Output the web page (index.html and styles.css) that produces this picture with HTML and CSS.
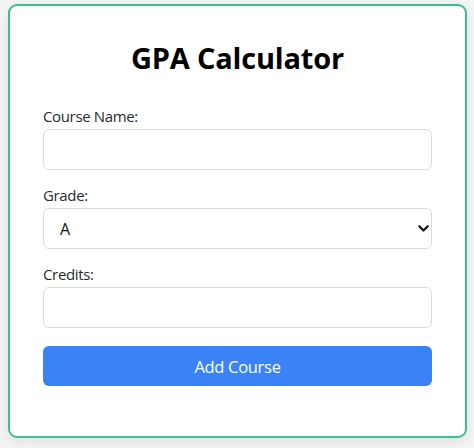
FILE: index.html
```html
<!DOCTYPE html>
<html>
<head>
<meta charset="utf-8">
<link rel="stylesheet" href="styles.css">
</head>
<body>
<div class="card">
  <h1 class="title">GPA Calculator</h1>
  <form class="form">
    <div class="field">
      <label class="label">Course Name:</label>
      <input class="control" type="text">
    </div>
    <div class="field">
      <label class="label">Grade:</label>
      <div class="select-wrap">
        <div class="control select">A</div>
        <svg class="chev" width="11" height="7" viewBox="0 0 11 7"><path d="M1.3 1.3 L5.5 5.5 L9.7 1.3" fill="none" stroke="#111" stroke-width="2.2" stroke-linecap="round" stroke-linejoin="round"/></svg>
      </div>
    </div>
    <div class="field">
      <label class="label">Credits:</label>
      <input class="control" type="text">
    </div>
    <button class="btn" type="button">Add Course</button>
  </form>
</div>
</body>
</html>
```
FILE: styles.css
```css
* { box-sizing: border-box; }
html, body { margin: 0; }
body {
  background: #f3f4f6;
  padding: 4px 7px 0 8px;
  font-family: "Open Sans", "Noto Sans", sans-serif;
  height: 448px;
  overflow: hidden;
}
.card {
  width: 459px;
  height: 434px;
  background: #fff;
  border: 2px solid #3dbf8c;
  border-radius: 9px;
  box-shadow: 0 4px 12px rgba(0,0,0,0.08);
  padding: 0 33px;
}
.title {
  margin: 32px 0 0;
  font-size: 29px;
  line-height: 40px;
  font-weight: 700;
  text-align: center;
  color: #000;
  letter-spacing: -0.2px;
}
.form {
  display: flex;
  flex-direction: column;
  margin-top: 29px;
}
.field {
  display: flex;
  flex-direction: column;
  margin-bottom: 16px;
}
.label {
  font-size: 15px;
  line-height: 19px;
  font-weight: 500;
  color: #262b33;
  letter-spacing: -0.35px;
  margin-bottom: 3px;
}
.control {
  height: 41px;
  width: 100%;
  border: 1px solid #dcdcdc;
  border-radius: 6px;
  background: #fff;
  font-family: inherit;
  font-size: 16px;
  padding: 0 16px;
}
.select-wrap { position: relative; }
.select {
  display: flex;
  align-items: center;
  color: #111;
  font-size: 16px;
}
.chev {
  position: absolute;
  right: 3px;
  top: 17px;
}
.btn {
  margin-top: 2px;
  height: 40px;
  width: 100%;
  border: none;
  border-radius: 6px;
  background: #3b82f6;
  color: #fff;
  font-family: inherit;
  font-size: 16.5px;
  letter-spacing: -0.3px;
}
```
